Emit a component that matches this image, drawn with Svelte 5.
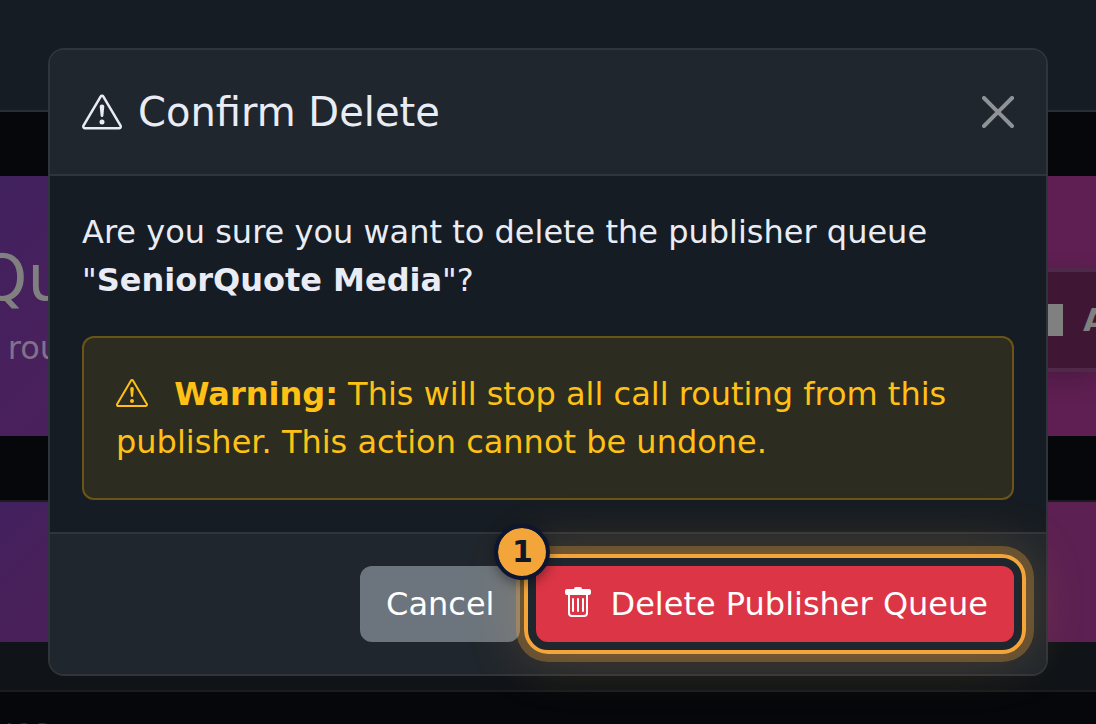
<script>
  const publisher = 'SeniorQuote Media';
  let step = $state(1);
</script>

{#snippet warningIcon()}
  <svg viewBox="0 0 16 16" fill="currentColor" aria-hidden="true">
    <path d="M7.938 2.016A.13.13 0 0 1 8.002 2a.13.13 0 0 1 .063.016.15.15 0 0 1 .054.057l6.857 11.667c.036.06.035.124.002.183a.2.2 0 0 1-.054.06.1.1 0 0 1-.066.017H1.146a.1.1 0 0 1-.066-.017.2.2 0 0 1-.054-.06.18.18 0 0 1 .002-.183L7.884 2.073a.15.15 0 0 1 .054-.057m1.044-.45a1.13 1.13 0 0 0-1.96 0L.165 13.233c-.457.778.091 1.767.98 1.767h13.713c.889 0 1.438-.99.98-1.767z"/>
    <path d="M7.002 12a1 1 0 1 1 2 0 1 1 0 0 1-2 0M7.1 5.995a.905.905 0 1 1 1.8 0l-.35 3.507a.552.552 0 0 1-1.1 0z"/>
  </svg>
{/snippet}

<div class="page">
  <div class="navbar"></div>
  <section class="banner">
    <div class="intro">
      <div class="heading">Qu</div>
      <div class="sub">rou</div>
    </div>
    <div class="add"><span class="block"></span><span>A</span></div>
  </section>
  <section class="card">
    <div class="card-head"></div>
    <div class="card-foot"></div>
  </section>
  <div class="list">ues</div>
</div>

<div class="overlay">
  <div class="modal" role="dialog" aria-modal="true" aria-labelledby="modal-title">
    <header>
      <h5 id="modal-title">{@render warningIcon()}<span>Confirm Delete</span></h5>
      <button type="button" class="close" aria-label="Close">
        <svg viewBox="0 0 16 16" fill="currentColor"><path d="M.293.293a1 1 0 0 1 1.414 0L8 6.586 14.293.293a1 1 0 1 1 1.414 1.414L9.414 8l6.293 6.293a1 1 0 0 1-1.414 1.414L8 9.414l-6.293 6.293a1 1 0 0 1-1.414-1.414L6.586 8 .293 1.707a1 1 0 0 1 0-1.414"/></svg>
      </button>
    </header>
    <main>
      <p>Are you sure you want to delete the publisher queue "<strong>{publisher}</strong>"?</p>
      <div class="alert" role="alert">
        {@render warningIcon()}
        <strong>Warning:</strong> This will stop all call routing from this publisher. This action cannot be undone.
      </div>
    </main>
    <footer>
      <button type="button" class="btn cancel">Cancel</button>
      <div class="target">
        <button type="button" class="btn delete"><svg viewBox="0 0 16 16" fill="currentColor" aria-hidden="true">
            <path d="M5.5 5.5A.5.5 0 0 1 6 6v6a.5.5 0 0 1-1 0V6a.5.5 0 0 1 .5-.5m2.5 0a.5.5 0 0 1 .5.5v6a.5.5 0 0 1-1 0V6a.5.5 0 0 1 .5-.5m3 .5a.5.5 0 0 0-1 0v6a.5.5 0 0 0 1 0z"/>
            <path d="M14.5 3a1 1 0 0 1-1 1H13v9a2 2 0 0 1-2 2H5a2 2 0 0 1-2-2V4h-.5a1 1 0 0 1-1-1V2a1 1 0 0 1 1-1H6a1 1 0 0 1 1-1h2a1 1 0 0 1 1 1h3.500a1 1 0 0 1 1 1zM4 4v9a1 1 0 0 0 1 1h6a1 1 0 0 0 1-1V4z"/>
          </svg><span>Delete Publisher Queue</span></button>
        <span class="ring"></span>
        <span class="badge">{step}</span>
      </div>
    </footer>
  </div>
</div>

<style>
  :global(body) {
    background: #05070b;
    overflow: hidden;
  }
  :global(*) {
    box-sizing: border-box;
  }
  .page,
  .overlay {
    font: 32px/48px "DejaVu Sans", sans-serif;
  }
  .page {
    height: 100vh;
    overflow: hidden;
  }
  .navbar {
    height: 112px;
    background: #161c23;
    border-bottom: 2px solid #2a2d32;
  }
  .banner {
    display: flex;
    justify-content: space-between;
    align-items: center;
    height: 260px;
    margin: 64px 0;
    background: linear-gradient(135deg, #41215f 0%, #5f1f52 70%);
    color: #808080;
  }
  .intro {
    display: flex;
    flex-direction: column;
    align-items: flex-end;
    gap: 8px;
    width: 68px;
    white-space: nowrap;
  }
  .heading {
    font-size: 64px;
    line-height: 76px;
  }
  .sub {
    margin-right: 8px;
    color: #81718a;
  }
  .add {
    display: flex;
    align-items: center;
    align-self: flex-start;
    gap: 20px;
    width: 64px;
    height: 104px;
    margin-top: 92px;
    overflow: hidden;
    background: #401635;
    border: solid #50284a;
    border-width: 4px 0;
    box-shadow: 0 8px 24px rgba(0, 0, 0, 0.2);
    font-weight: bold;
  }
  .block {
    flex: none;
    width: 31px;
    height: 32px;
    background: #808080;
  }
  .card {
    border: solid #1a1c1f;
    border-width: 2px 0;
  }
  .card-head {
    height: 140px;
    background: linear-gradient(135deg, #41215f 0%, #48205a 8%, #5c2052 85%);
  }
  .card-foot {
    height: 48px;
    background: #101418;
  }
  .list {
    display: flex;
    justify-content: flex-end;
    width: 50px;
    padding-top: 14px;
    color: #2b2d31;
  }
  .overlay {
    position: absolute;
    inset: 0;
    padding: 48px;
    color: #e9ecf5;
  }
  .modal {
    border: 2px solid #31343a;
    border-radius: 16px;
    background: #161c23;
  }
  header {
    display: flex;
    align-items: center;
    justify-content: space-between;
    padding: 32px;
    background: #20262d;
    border-bottom: 2px solid #31343a;
    border-radius: 14px 14px 0 0;
  }
  h5 {
    display: flex;
    align-items: center;
    gap: 16px;
    margin: 0;
    font-size: 40px;
    line-height: 60px;
    font-weight: 400;
  }
  h5 svg {
    width: 40px;
    height: 40px;
  }
  .close {
    display: flex;
    padding: 0;
    border: 0;
    background: none;
    color: #8f9296;
  }
  .close svg {
    width: 32px;
    height: 32px;
  }
  main {
    padding: 32px;
  }
  p {
    margin: 0 0 32px;
  }
  .alert {
    padding: 32px;
    border: 2px solid #6b5516;
    border-radius: 12px;
    background: #2d2c20;
    color: #ffc116;
  }
  .alert svg,
  .btn svg {
    width: 32px;
    height: 32px;
    margin-right: 16px;
    vertical-align: -4px;
  }
  footer {
    display: flex;
    justify-content: flex-end;
    gap: 16px;
    padding: 32px;
    background: #20262d;
    border-top: 2px solid #31343a;
    border-radius: 0 0 14px 14px;
  }
  .btn {
    display: block;
    padding: 12px 24px;
    border: 2px solid;
    border-radius: 12px;
    font: inherit;
    color: #fff;
    white-space: nowrap;
  }
  .cancel {
    background: #6c757d;
    border-color: #6c757d;
  }
  .delete {
    background: #dc3545;
    border-color: #dc3545;
  }
  .target {
    position: relative;
  }
  .ring {
    position: absolute;
    inset: -12px;
    border: 4px solid #f3a53a;
    border-radius: 24px;
    box-shadow: 0 0 0 8px rgba(243, 165, 58, 0.3), 0 0 56px 4px rgba(243, 165, 58, 0.22);
    pointer-events: none;
  }
  .badge {
    position: absolute;
    top: -42px;
    left: -42px;
    width: 56px;
    height: 56px;
    border: 4px solid #0c1630;
    border-radius: 50%;
    background: #f3a53a padding-box;
    box-shadow: 0 4px 12px rgba(0, 0, 0, 0.4);
    color: #101828;
    font-size: 30px;
    font-weight: bold;
    line-height: 48px;
    text-align: center;
  }
</style>
